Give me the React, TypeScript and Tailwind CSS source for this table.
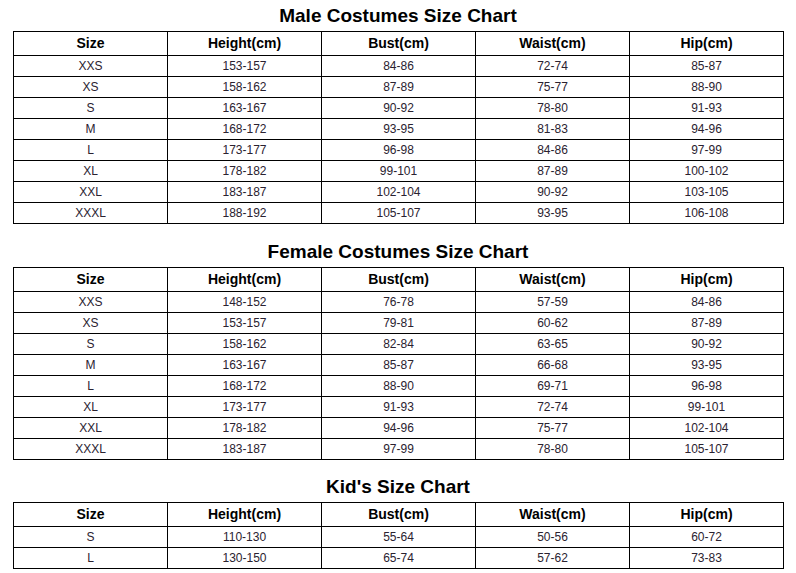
const headers = ['Size', 'Height(cm)', 'Bust(cm)', 'Waist(cm)', 'Hip(cm)'];

type Row = [string, string, string, string, string];

const charts: { title: string; gap: string; rows: Row[] }[] = [
	{
		title: 'Male Costumes Size Chart',
		gap: 'mt-[4px]',
		rows: [
			['XXS', '153-157', '84-86', '72-74', '85-87'],
			['XS', '158-162', '87-89', '75-77', '88-90'],
			['S', '163-167', '90-92', '78-80', '91-93'],
			['M', '168-172', '93-95', '81-83', '94-96'],
			['L', '173-177', '96-98', '84-86', '97-99'],
			['XL', '178-182', '99-101', '87-89', '100-102'],
			['XXL', '183-187', '102-104', '90-92', '103-105'],
			['XXXL', '188-192', '105-107', '93-95', '106-108'],
		],
	},
	{
		title: 'Female Costumes Size Chart',
		gap: 'mt-[16px]',
		rows: [
			['XXS', '148-152', '76-78', '57-59', '84-86'],
			['XS', '153-157', '79-81', '60-62', '87-89'],
			['S', '158-162', '82-84', '63-65', '90-92'],
			['M', '163-167', '85-87', '66-68', '93-95'],
			['L', '168-172', '88-90', '69-71', '96-98'],
			['XL', '173-177', '91-93', '72-74', '99-101'],
			['XXL', '178-182', '94-96', '75-77', '102-104'],
			['XXXL', '183-187', '97-99', '78-80', '105-107'],
		],
	},
	{
		title: "Kid's Size Chart",
		gap: 'mt-[15px]',
		rows: [
			['S', '110-130', '55-64', '50-56', '60-72'],
			['L', '130-150', '65-74', '57-62', '73-83'],
		],
	},
];

function SizeTable({ title, gap, rows }: { title: string; gap: string; rows: Row[] }) {
	return (
		<section className={gap}>
			<h2 className="mb-[3px] text-center text-[19px] leading-[24px] font-bold text-black">
				{title}
			</h2>
			<table className="ml-[13px] w-[771px] table-fixed border-collapse border border-black">
				<thead>
					<tr>
						{headers.map((h) => (
							<th
								key={h}
								className="h-[24px] border border-black p-0 text-center text-[14px] font-bold text-black"
							>
								{h}
							</th>
						))}
					</tr>
				</thead>
				<tbody>
					{rows.map((r) => (
						<tr key={r[0]}>
							{r.map((c, i) => (
								<td
									key={i}
									className="h-[21px] border border-black p-0 text-center text-[12px] text-[#2a2230]"
								>
									{c}
								</td>
							))}
						</tr>
					))}
				</tbody>
			</table>
		</section>
	);
}

export default function App() {
	return (
		<div className="h-[573px] w-[796px] overflow-hidden bg-white font-['Liberation_Sans',Arial,sans-serif]">
			{charts.map((c) => (
				<SizeTable key={c.title} {...c} />
			))}
		</div>
	);
}
